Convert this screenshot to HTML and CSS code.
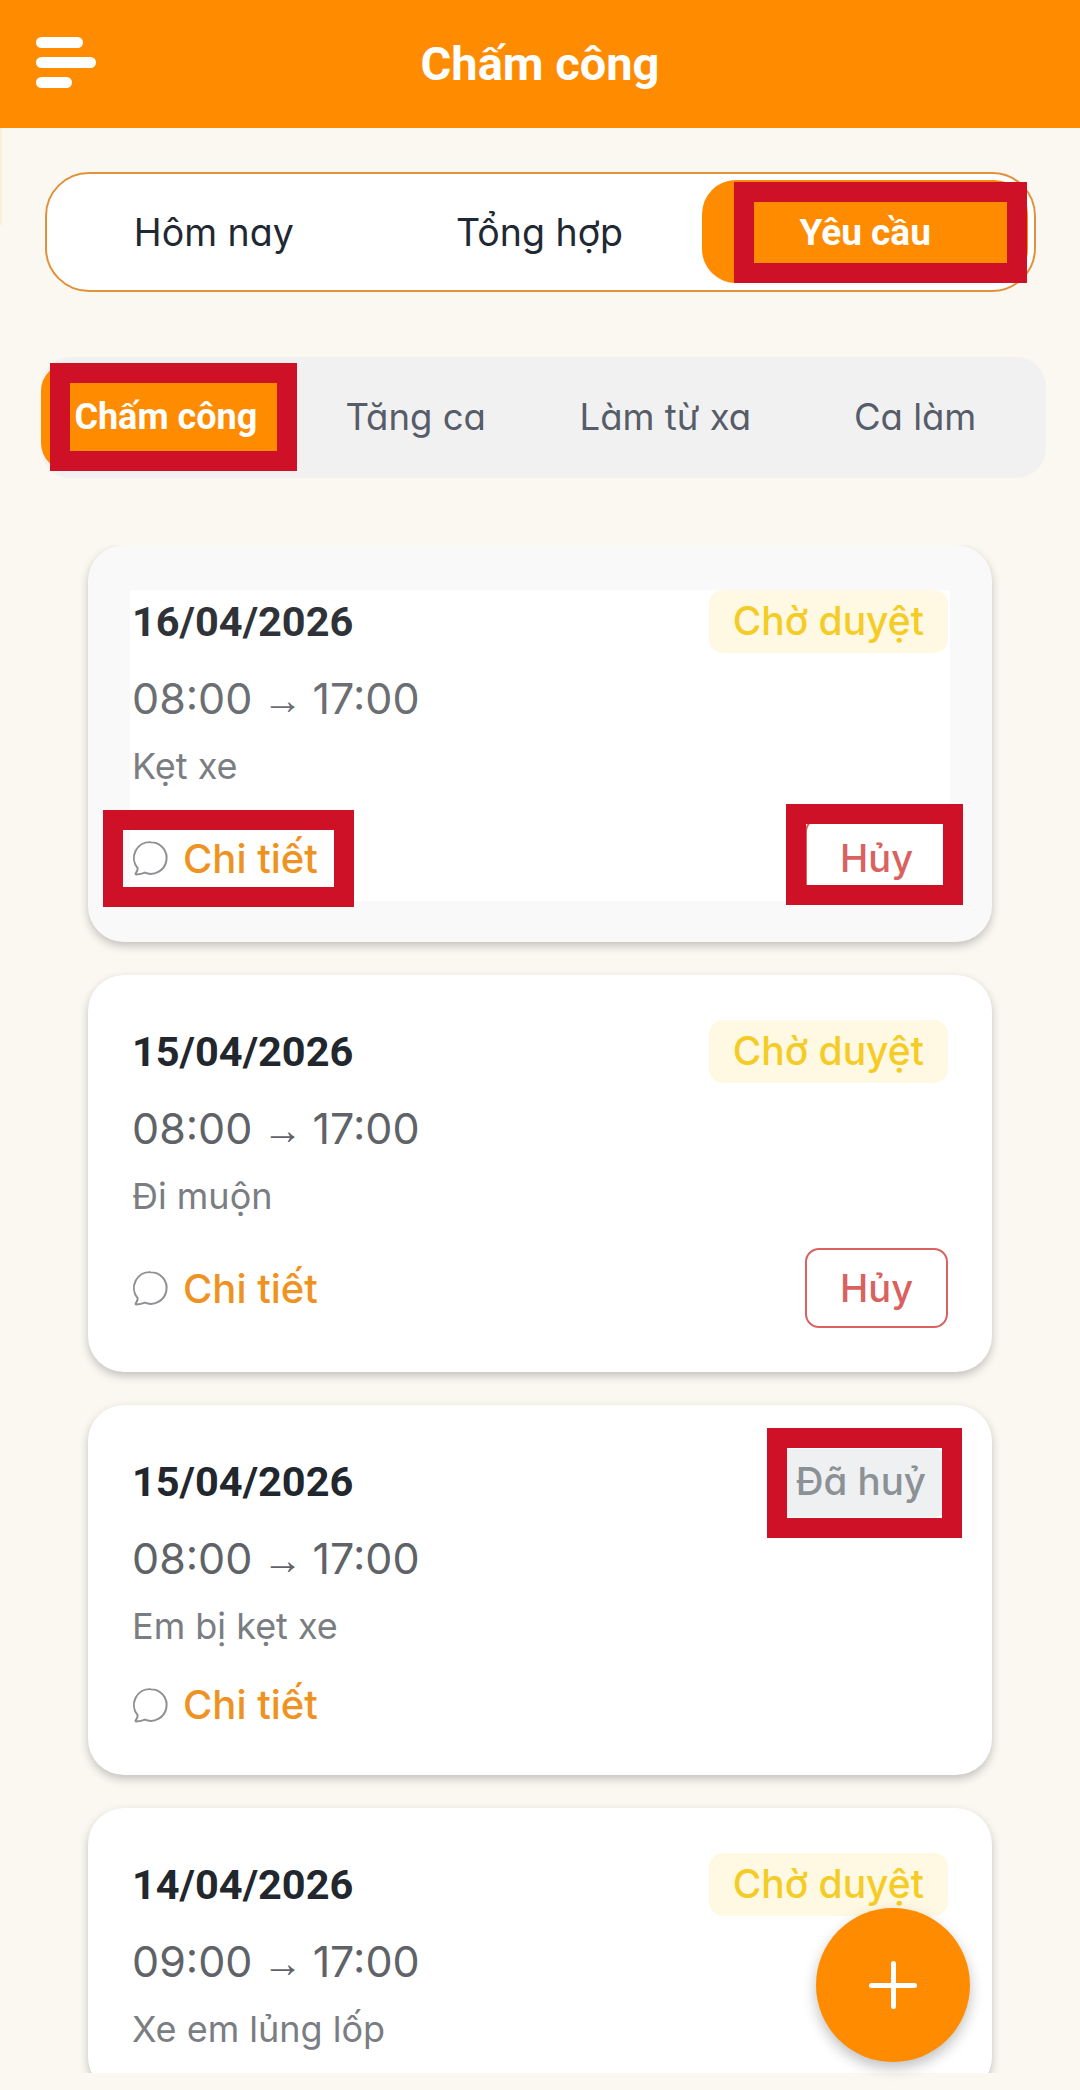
FILE: index.html
```html
<!DOCTYPE html>
<html lang="vi">
<head>
    <meta charset="utf-8">
    <title>Chấm công</title>
    <link rel="stylesheet" href="styles.css">
</head>
<body>

<div class="app">
    <header class="topbar">
        <div class="menu-icon"><span></span><span></span><span></span></div>
        <h1>Chấm công</h1>
    </header>

    <nav class="seg">
        <a href="#">Hôm nay</a>
        <a href="#">Tổng hợp</a>
        <a href="#" class="active mark mark-seg">Yêu cầu</a>
    </nav>

    <nav class="subtabs">
        <a href="#" class="active mark mark-sub">Chấm công</a>
        <a href="#">Tăng ca</a>
        <a href="#">Làm từ xa</a>
        <a href="#">Ca làm</a>
    </nav>

    <main class="list">
        <!-- Card dang duoc nhan -->
        <div class="card pressed">
            <div class="card-body">
                <div class="card-head">
                    <span class="date">16/04/2026</span>
                    <span class="status pending">Chờ duyệt</span>
                </div>
                <p class="time">08:00 <span class="arrow">→</span> 17:00</p>
                <p class="reason">Kẹt xe</p>
                <div class="actions">
                    <a href="#" class="detail mark mark-detail">
                        <svg class="chat-icon" viewBox="0 0 24 24"><path d="M12.5 2.5a9.5 9.5 0 1 1-3.6 18.3c-1.3.6-3 1-5.1 1.1-.5 0-.7-.4-.4-.7.9-1 1.3-2 1.2-3.1A9.5 9.5 0 0 1 12.5 2.5z"/></svg>
                        Chi tiết
                    </a>
                    <button class="cancel mark mark-cancel">Hủy</button>
                </div>
            </div>
        </div>

        <div class="card">
            <div class="card-body">
                <div class="card-head">
                    <span class="date">15/04/2026</span>
                    <span class="status pending">Chờ duyệt</span>
                </div>
                <p class="time">08:00 <span class="arrow">→</span> 17:00</p>
                <p class="reason">Đi muộn</p>
                <div class="actions">
                    <a href="#" class="detail">
                        <svg class="chat-icon" viewBox="0 0 24 24"><path d="M12.5 2.5a9.5 9.5 0 1 1-3.6 18.3c-1.3.6-3 1-5.1 1.1-.5 0-.7-.4-.4-.7.9-1 1.3-2 1.2-3.1A9.5 9.5 0 0 1 12.5 2.5z"/></svg>
                        Chi tiết
                    </a>
                    <button class="cancel">Hủy</button>
                </div>
            </div>
        </div>

        <div class="card">
            <div class="card-body">
                <div class="card-head">
                    <span class="date">15/04/2026</span>
                    <span class="status cancelled mark mark-status">Đã huỷ</span>
                </div>
                <p class="time">08:00 <span class="arrow">→</span> 17:00</p>
                <p class="reason">Em bị kẹt xe</p>
                <div class="actions">
                    <a href="#" class="detail">
                        <svg class="chat-icon" viewBox="0 0 24 24"><path d="M12.5 2.5a9.5 9.5 0 1 1-3.6 18.3c-1.3.6-3 1-5.1 1.1-.5 0-.7-.4-.4-.7.9-1 1.3-2 1.2-3.1A9.5 9.5 0 0 1 12.5 2.5z"/></svg>
                        Chi tiết
                    </a>
                </div>
            </div>
        </div>

        <div class="card">
            <div class="card-body">
                <div class="card-head">
                    <span class="date">14/04/2026</span>
                    <span class="status pending">Chờ duyệt</span>
                </div>
                <p class="time">09:00 <span class="arrow">→</span> 17:00</p>
                <p class="reason">Xe em lủng lốp</p>
            </div>
        </div>
    </main>

    <button class="fab"><span class="plus"></span></button>
</div>

</body>
</html>
```

FILE: styles.css
```css
* {
    box-sizing: border-box;
}
body {
    margin: 0;
    background-color: #fbf7f1;
    font-family: Inter, "Noto Sans", sans-serif;
    font-feature-settings: "cv11";
}
a {
    text-decoration: none;
    color: inherit;
}
p {
    margin: 0;
}
.app {
    position: relative;
    width: 1080px;
    height: 2090px;
    overflow: hidden;
}
/* light strip on the left edge under the bar */
.app::before {
    content: "";
    position: absolute;
    left: 0;
    top: 128px;
    width: 2px;
    height: 97px;
    background-color: #fdeedb;
}

/* top bar */
.topbar {
    position: relative;
    height: 128px;
    padding-bottom: 2px;
    background-color: #ff8c00;
    display: flex;
    align-items: center;
    justify-content: center;
}
.topbar h1 {
    margin: 0;
    color: #fff;
    font: 700 47px Roboto, sans-serif;
}
.menu-icon {
    position: absolute;
    left: 36px;
    top: 37px;
    display: flex;
    flex-direction: column;
    gap: 9px;
}
.menu-icon span {
    display: block;
    height: 11px;
    border-radius: 6px;
    background-color: #fff;
    width: 47px;
}
.menu-icon span:nth-child(2) {
    width: 60px;
}
.menu-icon span:nth-child(3) {
    width: 36px;
}

/* main tabs */
.seg {
    margin: 44px 44px 0 45px;
    height: 120px;
    padding: 6px 6px 7px 4px;
    display: grid;
    grid-template-columns: repeat(3, 1fr);
    background-color: #fff;
    border: 2px solid #e0923a;
    border-radius: 44px;
}
.seg a {
    display: flex;
    align-items: center;
    justify-content: center;
    padding-top: 2px;
    font-size: 37.5px;
    color: #1f2933;
    border-radius: 34px;
}
.seg a.active {
    background-color: #ff8c00;
    color: #fff;
    font: 700 37px Roboto, sans-serif;
}

/* sub tabs */
.subtabs {
    margin: 65px 34px 0 41px;
    height: 121px;
    padding: 6px 6px 7px 0;
    display: grid;
    grid-template-columns: repeat(4, 1fr);
    background-color: #f1f1f2;
    border-radius: 30px;
}
.subtabs a {
    display: flex;
    align-items: center;
    justify-content: center;
    font-size: 36.5px;
    color: #565d68;
    border-radius: 28px;
}
.subtabs a.active {
    background-color: #ff8c00;
    color: #fff;
    font: 700 36px Roboto, sans-serif;
}

/* red marks drawn over the screenshot */
.mark {
    position: relative;
}
.mark::after {
    content: "";
    position: absolute;
    border: 20px solid #ce1126;
    border-radius: 0;
}
.mark-seg::after {
    top: 2px;
    bottom: 0;
    left: 32px;
    right: 1px;
}
.mark-sub::after {
    top: 0;
    bottom: 0;
    left: 9px;
    right: -6px;
}
.mark-detail::after {
    top: -22px;
    bottom: -22px;
    left: -27px;
    right: -36px;
}
.mark-cancel::after {
    top: -16px;
    bottom: -9px;
    left: -21px;
    right: -17px;
}
.mark-status::after {
    top: -21px;
    bottom: -21px;
    left: -6px;
    right: -14px;
}

/* request cards */
.list {
    height: 1528px;
    margin-top: 67px;
    padding: 0 88px;
    display: flex;
    flex-direction: column;
    gap: 33px;
    overflow: hidden;
}
.card {
    flex: none;
    padding: 48px 42px 41px;
    background-color: #fff;
    border-radius: 36px;
    box-shadow: 0 4px 10px rgba(0, 0, 0, 0.22);
}
.card.pressed {
    background-color: #f9f9f9;
}
.card-body {
    padding: 0 2px 3px;
    background-color: #fff;
}
.card-head {
    height: 63px;
    margin-top: -3px;
    display: flex;
    align-items: center;
    justify-content: space-between;
}
.date {
    font: 700 41.5px Roboto, sans-serif;
    color: #22272e;
}
.pressed .date {
    color: #2f3338;
}
.status {
    height: 63px;
    padding: 0 24px 2px;
    display: flex;
    align-items: center;
    font-size: 39px;
    font-weight: 500;
    border-radius: 14px;
}
.pending {
    background-color: #fff9e3;
    color: #f5cc25;
}
.cancelled {
    height: 68px;
    margin: -1px 0 -4px;
    padding: 0 22px 4px 23px;
    font-size: 38.5px;
    background-color: #eef0f2;
    color: #8c9196;
}
.time {
    margin-top: 20px;
    font-size: 43px;
    line-height: 50px;
    color: #5f6368;
}
.pressed .time {
    color: #6b6e72;
}
.arrow {
    margin: 0 -2px;
    font: 40px/1 "Liberation Sans", sans-serif;
}
.reason {
    margin-top: 23px;
    font-size: 36px;
    line-height: 40px;
    color: #7a7d82;
}
.actions {
    margin-top: 32px;
    display: flex;
    align-items: center;
    justify-content: space-between;
}
.detail {
    height: 53px;
    margin-left: -2px;
    display: flex;
    align-items: center;
    gap: 13px;
    font-size: 40px;
    font-weight: 500;
    color: #ee9322;
}
.chat-icon {
    width: 40px;
    height: 40px;
    fill: none;
    stroke: #8e9094;
    stroke-width: 1.2;
}
.cancel {
    width: 143px;
    height: 80px;
    padding: 0;
    background-color: #fff;
    border: 2px solid #d9625f;
    border-radius: 14px;
    color: #d9625f;
    font-family: inherit;
    font-feature-settings: inherit;
    font-size: 38px;
    font-weight: 500;
}

/* add button */
.fab {
    position: absolute;
    left: 816px;
    top: 1908px;
    width: 154px;
    height: 154px;
    border: none;
    border-radius: 50%;
    background-color: #ff8c00;
    box-shadow: 0 6px 14px rgba(0, 0, 0, 0.25);
    display: flex;
    align-items: center;
    justify-content: center;
}
.plus {
    position: relative;
    width: 48px;
    height: 48px;
}
.plus::before,
.plus::after {
    content: "";
    position: absolute;
    background-color: #fff;
    border-radius: 3px;
}
.plus::before {
    left: 0;
    right: 0;
    top: 22px;
    height: 5px;
}
.plus::after {
    top: 0;
    bottom: 0;
    left: 22px;
    width: 5px;
}
```
